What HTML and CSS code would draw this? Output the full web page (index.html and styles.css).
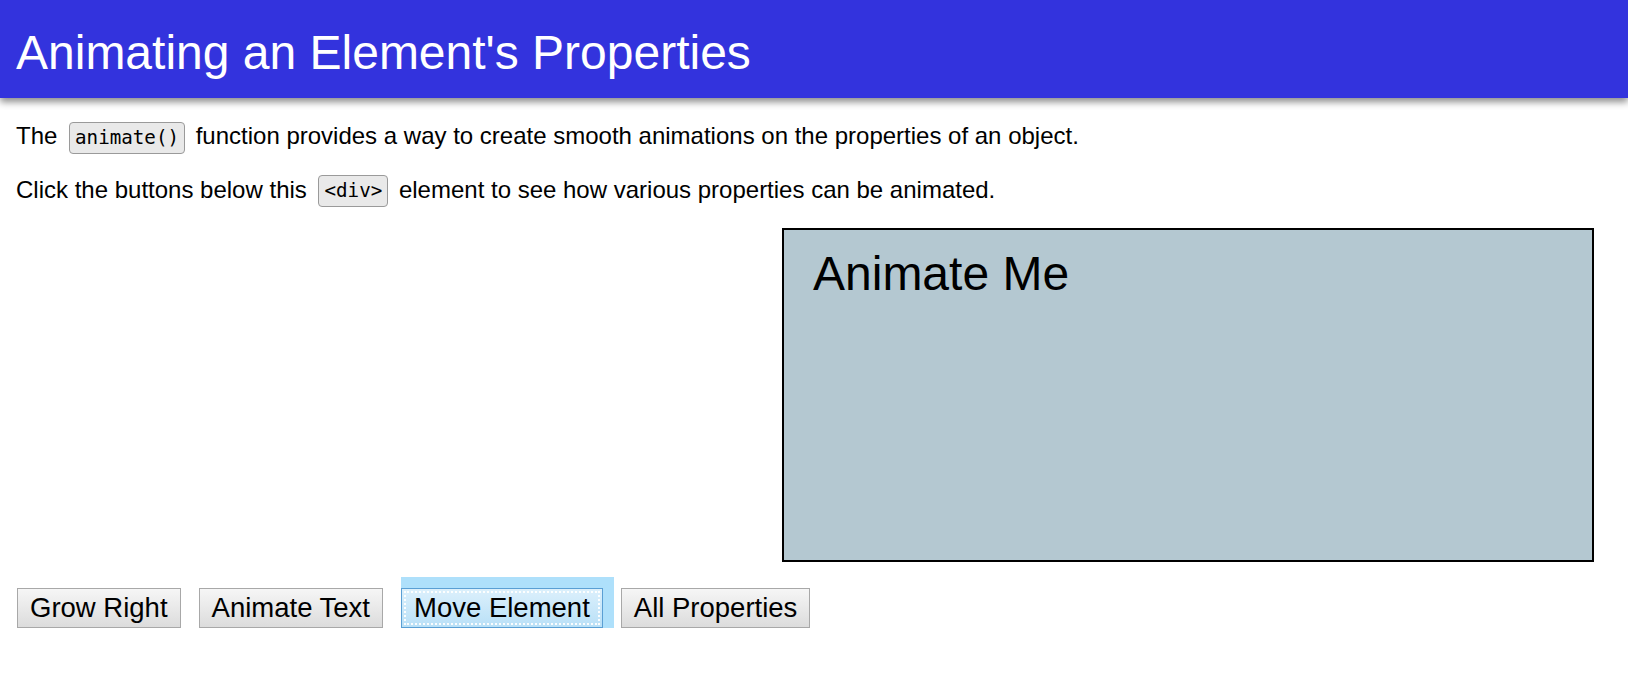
FILE: index.html
```html
<!DOCTYPE html>
<html lang="en">
<head>
<meta charset="utf-8">
<title>Animating an Element's Properties</title>
<link rel="stylesheet" href="styles.css">
</head>
<body>
<header class="topbar">
  <h1 class="title">Animating an Element's Properties</h1>
</header>
<main class="content">
  <p class="intro">The <code class="code">animate()</code> function provides a way to create smooth animations on the properties of an object.</p>
  <p class="intro">Click the buttons below this <code class="code">&lt;div&gt;</code> element to see how various properties can be animated.</p>
  <div class="stage">
    <div class="target">Animate Me</div>
  </div>
  <div class="controls">
    <button class="btn" type="button">Grow Right</button>
    <button class="btn" type="button">Animate Text</button>
    <button class="btn btn-focused" type="button">Move Element</button>
    <button class="btn" type="button">All Properties</button>
  </div>
</main>
</body>
</html>
```
FILE: styles.css
```css
html {
  background: #ffffff;
}

body {
  margin: 0;
  padding: 0;
  font-family: "Liberation Sans", Arial, sans-serif;
  color: #000;
}

.topbar {
  background: #3333dd;
  height: 98px;
  box-sizing: border-box;
  padding: 25px 16px 0 16px;
  box-shadow: 0 4px 7px rgba(0, 0, 0, 0.45);
  position: relative;
  z-index: 1;
}

.title {
  margin: 0;
  font-size: 48px;
  font-weight: normal;
  line-height: 55px;
  color: #ffffff;
}

.content {
  padding: 0 16px;
}

.intro {
  margin: 0;
  font-size: 24px;
  line-height: 33px;
}

.intro:first-child {
  margin-top: 21px;
}

.intro + .intro {
  margin-top: 19px;
}

.code {
  display: inline-block;
  font-family: "DejaVu Sans Mono", "Liberation Mono", monospace;
  font-size: 19.2px;
  line-height: 22px;
  padding: 4px 5px;
  margin: 0 4px 0 5px;
  background: #e9e9e9;
  border: 1px solid #9a9a9a;
  border-radius: 4px;
  vertical-align: middle;
}

.stage {
  margin-top: 21px;
}

.target {
  margin-left: 766px;
  width: 812px;
  height: 334px;
  box-sizing: border-box;
  border: 2px solid #000;
  background: #b4c8d1;
  padding: 16px 29px 0 29px;
  font-size: 48px;
  line-height: 55px;
}

.controls {
  display: flex;
  gap: 18px;
  margin-top: 26px;
  margin-left: 1px;
}

.btn {
  font-family: "Liberation Sans", Arial, sans-serif;
  font-size: 27.5px;
  line-height: 32px;
  height: 40px;
  padding: 3px 12px;
  color: #000;
  border: 1px solid #a8a8a8;
  border-radius: 0;
  background: linear-gradient(#f6f6f6, #dcdcdc);
}

.btn-focused {
  background: linear-gradient(#dcf0fc, #b9e0f7);
  border-color: #5a9fd4;
  outline: 2px dotted rgba(255, 255, 255, 0.95);
  outline-offset: -5px;
  box-shadow: 0 -11px 0 #aee0fb, 11px -11px 0 #aee0fb, 11px 0 0 #aee0fb;
}
```
